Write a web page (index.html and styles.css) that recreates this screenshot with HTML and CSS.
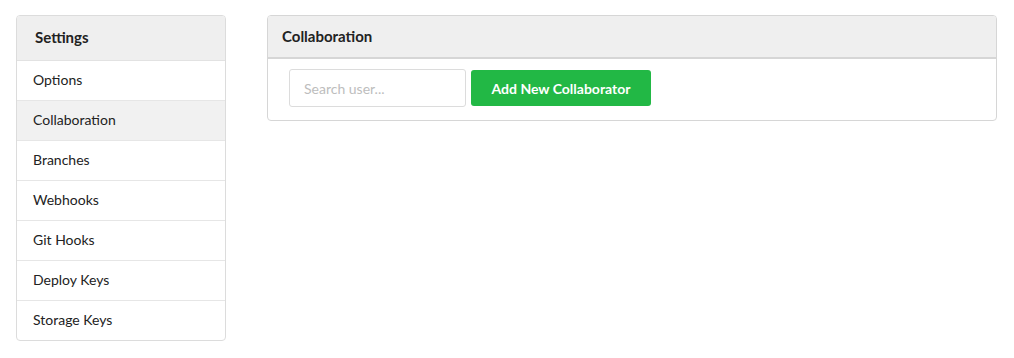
FILE: index.html
```html
<!DOCTYPE html>
<html lang="en">
<head>
  <meta charset="UTF-8" />
  <title>Settings - Collaboration</title>
  <link rel="stylesheet" href="styles.css">
</head>
<body>

<div class="layout">
  <aside class="sidebar">
    <div class="sidebar-title">Settings</div>
    <nav class="sidebar-menu">
      <a href="#" class="menu-item">Options</a>
      <a href="#" class="menu-item active">Collaboration</a>
      <a href="#" class="menu-item">Branches</a>
      <a href="#" class="menu-item">Webhooks</a>
      <a href="#" class="menu-item">Git Hooks</a>
      <a href="#" class="menu-item">Deploy Keys</a>
      <a href="#" class="menu-item">Storage Keys</a>
    </nav>
  </aside>

  <section class="panel">
    <div class="panel-header">Collaboration</div>
    <div class="panel-body">
      <input type="text" class="search-input" placeholder="Search user...">
      <button class="btn-green">Add New Collaborator</button>
    </div>
  </section>
</div>

</body>
</html>
```

FILE: styles.css
```css
* {
  box-sizing: border-box;
  margin: 0;
  padding: 0;
}

body {
  font-family: Lato, 'Liberation Sans', sans-serif;
  background: #fff;
  color: #222;
  padding: 15px 17px 0 16px;
}

.layout {
  display: flex;
  align-items: flex-start;
  gap: 41px;
}

.sidebar {
  width: 210px;
  flex-shrink: 0;
  border: 1px solid #dcdcdc;
  border-radius: 4px;
  overflow: hidden;
}

.sidebar-title {
  height: 45px;
  background: #efefef;
  border-bottom: 1px solid #e2e2e2;
  padding: 0 18px;
  font-size: 15px;
  font-weight: 700;
  line-height: 42px;
}

.sidebar-menu {
  display: flex;
  flex-direction: column;
}

.menu-item {
  display: block;
  height: 40px;
  line-height: 37px;
  padding: 0 16px;
  font-size: 14px;
  color: #222;
  text-decoration: none;
  border-bottom: 1px solid #e6e6e6;
}

.menu-item:last-child {
  border-bottom: none;
  height: 39px;
}

.menu-item.active {
  background: #f1f1f1;
}

.panel {
  flex: 1;
  border: 1px solid #d6d6d6;
  border-radius: 4px;
  overflow: hidden;
}

.panel-header {
  height: 43px;
  background: #efefef;
  border-bottom: 2px solid #d6d6d6;
  padding: 0 14px;
  font-size: 15px;
  font-weight: 700;
  line-height: 41px;
}

.panel-body {
  display: flex;
  align-items: center;
  gap: 5px;
  padding: 10px 21px 13px;
}

.search-input {
  width: 177px;
  height: 38px;
  border: 1px solid #dcdcdc;
  border-radius: 3px;
  padding: 0 14px;
  font-family: inherit;
  font-size: 14px;
  color: #333;
  outline: none;
}

.search-input::placeholder {
  color: #bdbdbd;
}

.btn-green {
  width: 180px;
  height: 36px;
  background: #22b845;
  color: #fff;
  border: none;
  border-radius: 3px;
  font-family: inherit;
  font-size: 14px;
  font-weight: 700;
  cursor: pointer;
}

.btn-green:hover {
  background: #1ea63e;
}
```
